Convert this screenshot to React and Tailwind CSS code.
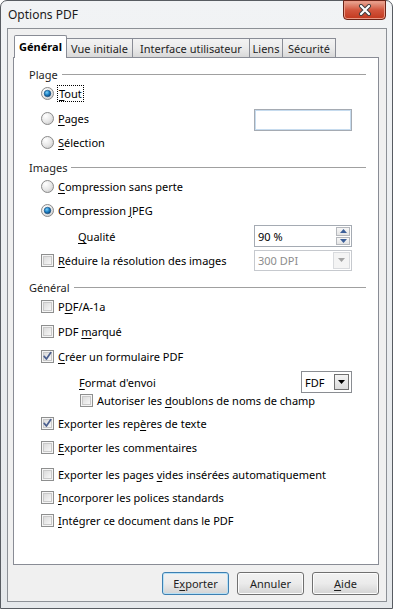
import React from "react"

function Radio({ checked }) {
  return (
    <svg width="13" height="13" viewBox="0 0 13 13" className="shrink-0">
      <defs>
        <radialGradient id="rbg" cx="0.35" cy="0.3" r="0.8">
          <stop offset="0" stopColor="#ffffff" />
          <stop offset="0.6" stopColor="#e6e6e6" />
          <stop offset="1" stopColor="#c9c9c9" />
        </radialGradient>
        <radialGradient id="rdot" cx="0.4" cy="0.35" r="0.7">
          <stop offset="0" stopColor="#7fd0f7" />
          <stop offset="0.5" stopColor="#1e84c8" />
          <stop offset="1" stopColor="#0d3f70" />
        </radialGradient>
      </defs>
      <circle cx="6.5" cy="6.5" r="6" fill="url(#rbg)" stroke="#8a8a8a" />
      {checked && <circle cx="6.5" cy="6.5" r="3.3" fill="url(#rdot)" stroke="#154a78" strokeWidth="0.6" />}
    </svg>
  )
}

function Check({ checked }) {
  return (
    <svg width="13" height="13" viewBox="0 0 13 13" className="shrink-0">
      <defs>
        <linearGradient id="cbg" x1="0" y1="0" x2="1" y2="1">
          <stop offset="0" stopColor="#d9d9d9" />
          <stop offset="1" stopColor="#f9f9f9" />
        </linearGradient>
      </defs>
      <rect x="0.5" y="0.5" width="12" height="12" fill="#f5f5f5" stroke="#8e8f8f" />
      <rect x="2.5" y="2.5" width="8" height="8" fill="url(#cbg)" stroke="#c9c9c9" />
      {checked && (
        <path d="M3.2 6.4 L5.4 9 L9.8 2.6" fill="none" stroke="#4b5f8e" strokeWidth="1.7" strokeLinecap="round" strokeLinejoin="round" />
      )}
    </svg>
  )
}

function Header({ title, className }) {
  return (
    <div className={`flex items-center h-[18px] pl-[15px] pr-[12px] ${className}`}>
      <span className="text-[#1e1e1e]">{title}</span>
      <div className="flex-1 ml-[4px] h-px bg-[#a0a0a0]" />
    </div>
  )
}

function OptRow({ className, pad = "pl-[27px]", children, control }) {
  return (
    <div className={`flex items-center h-[18px] pr-[26px] ${pad} ${className}`}>
      {children}
      {control && <div className="ml-auto flex items-center">{control}</div>}
    </div>
  )
}

function Btn({ children, primary }) {
  return (
    <div
      className={`w-[67px] h-[23px] rounded-[3px] border flex items-center justify-center text-[#1e1e1e] bg-gradient-to-b from-[#f2f2f2] via-[#ebebeb] to-[#d3d3d3] ${
        primary ? "border-[#3c7fb1] shadow-[inset_0_0_0_1px_#b8e0f5]" : "border-[#707070] shadow-[inset_0_0_0_1px_#fcfcfc]"
      }`}
    >
      {children}
    </div>
  )
}

function Tab({ label, active, w }) {
  if (active) {
    return (
      <div className={`${w} h-[23px] -mb-px relative z-10 bg-white border border-b-0 border-[#898c95] rounded-t-[2px] flex items-center justify-center font-bold text-black pb-[2px]`}>
        {label}
      </div>
    )
  }
  return (
    <div className={`${w} h-[19px] -ml-px bg-gradient-to-b from-[#f3f3f3] via-[#ebebeb] to-[#d8d8d8] border border-b-0 border-[#898c95] flex items-center justify-center text-[#1e1e1e]`}>
      {label}
    </div>
  )
}

export default function App() {
  return (
    <div className="w-[393px] h-[609px] font-['Noto_Sans',sans-serif] text-[11px] leading-none text-black">
      <div className="w-[393px] h-[609px] flex flex-col border border-[#585c62] rounded-t-[7px] bg-gradient-to-b from-[#f1f3f5] to-[#e5e8eb]">
        {/* title bar */}
        <div className="h-[27px] flex items-start shrink-0">
          <span className="ml-[7px] mt-[8px] text-[12px] text-[#1b1b1b]">Options PDF</span>
          <div className="ml-auto mr-[6px] -mt-px w-[43px] h-[20px] rounded-b-[4px] border border-[#6b2418] bg-gradient-to-b from-[#e9a997] via-[#d2553d] to-[#c1361c] shadow-[inset_0_0_0_1px_#eb9a86] flex items-center justify-center">
            <svg width="14" height="12" viewBox="0 0 14 12">
              <path d="M3 2 L11 10 M11 2 L3 10" stroke="#3d3d3d" strokeWidth="4" strokeLinecap="round" />
              <path d="M3 2 L11 10 M11 2 L3 10" stroke="#ffffff" strokeWidth="2.2" strokeLinecap="round" />
            </svg>
          </div>
        </div>

        {/* client */}
        <div className="flex-1 ml-[6px] mr-[5px] mb-[6px] border border-[#8c9096] bg-[#f0f0f0] flex flex-col">
          <div className="flex items-end h-[22px] mt-[6px] pl-[6px]">
            <Tab label="Général" active w="w-[53px]" />
            <Tab label="Vue initiale" w="w-[67px]" />
            <Tab label="Interface utilisateur" w="w-[118px]" />
            <Tab label="Liens" w="w-[34px]" />
            <Tab label="Sécurité" w="w-[54px]" />
          </div>

          <div className="h-[508px] ml-[5px] mr-[7px] bg-white border border-[#898c95] flex flex-col">
            <Header title="Plage" className="mt-[7px]" />
            <OptRow className="mt-[1px]">
              <Radio checked />
              <span className="ml-[3px] px-[1px] py-[2px] border border-dotted border-black">
                <u className="underline-offset-2">T</u>out
              </span>
            </OptRow>
            <OptRow
              className="mt-[7px]"
              control={<div className="w-[98px] h-[22px] border border-[#a5abb3] shadow-[inset_0_0_0_1px_#c6dbee] bg-white mt-[4px]" />}
            >
              <Radio />
              <span className="ml-[4px]"><u className="underline-offset-2">P</u>ages</span>
            </OptRow>
            <OptRow className="mt-[6px]">
              <Radio />
              <span className="ml-[4px]"><u className="underline-offset-2">S</u>élection</span>
            </OptRow>

            <Header title="Images" className="mt-[7px]" />
            <OptRow className="mt-[1px]">
              <Radio />
              <span className="ml-[4px]"><u className="underline-offset-2">C</u>ompression sans perte</span>
            </OptRow>
            <OptRow className="mt-[6px]">
              <Radio checked />
              <span className="ml-[4px]">Compression <u className="underline-offset-2">J</u>PEG</span>
            </OptRow>
            <OptRow
              className="mt-[8px]"
              pad="pl-[64px]"
              control={
                <div className="w-[98px] h-[22px] border border-[#a5abb3] bg-white flex items-stretch">
                  <span className="flex-1 flex items-center pl-[3px]">90 %</span>
                  <div className="w-[16px] flex flex-col p-px gap-px">
                    <div className="flex-1 border border-[#b5b8bd] bg-gradient-to-b from-[#f7f7f7] to-[#e4e4e4] flex items-center justify-center">
                      <svg width="7" height="4" viewBox="0 0 7 4"><path d="M0 4 L3.5 0 L7 4 Z" fill="#3c5f99" /></svg>
                    </div>
                    <div className="flex-1 border border-[#b5b8bd] bg-gradient-to-b from-[#f7f7f7] to-[#e4e4e4] flex items-center justify-center">
                      <svg width="7" height="4" viewBox="0 0 7 4"><path d="M0 0 L7 0 L3.5 4 Z" fill="#3c5f99" /></svg>
                    </div>
                  </div>
                </div>
              }
            >
              <span><u className="underline-offset-2">Q</u>ualité</span>
            </OptRow>
            <OptRow
              className="mt-[6px]"
              control={
                <div className="w-[98px] h-[21px] border border-[#c6c9ce] bg-white flex items-stretch">
                  <span className="flex-1 flex items-center pl-[3px] text-[#8d8d8d]">300 DPI</span>
                  <div className="w-[17px] m-px border border-[#d9dbde] bg-[#f4f4f4] flex items-center justify-center">
                    <svg width="7" height="4" viewBox="0 0 7 4"><path d="M0 0 L7 0 L3.5 4 Z" fill="#a3a3a3" /></svg>
                  </div>
                </div>
              }
            >
              <Check />
              <span className="ml-[4px]"><u className="underline-offset-2">R</u>éduire la résolution des images</span>
            </OptRow>

            <Header title="Général" className="mt-[9px]" />
            <OptRow className="mt-[1px]">
              <Check />
              <span className="ml-[4px]">P<u className="underline-offset-2">D</u>F/A-1a</span>
            </OptRow>
            <OptRow className="mt-[7px]">
              <Check />
              <span className="ml-[4px]">PDF <u className="underline-offset-2">m</u>arqué</span>
            </OptRow>
            <OptRow className="mt-[7px]">
              <Check checked />
              <span className="ml-[4px]"><u className="underline-offset-2">C</u>réer un formulaire PDF</span>
            </OptRow>
            <OptRow
              className="mt-[8px]"
              pad="pl-[65px]"
              control={
                <div className="w-[51px] h-[22px] border border-[#8a8d92] bg-white flex items-stretch">
                  <span className="flex-1 flex items-center pl-[3px]">FDF</span>
                  <div className="w-[15px] m-[2px] border border-[#707070] bg-gradient-to-b from-[#f4f4f4] to-[#dcdcdc] flex items-center justify-center">
                    <svg width="7" height="4" viewBox="0 0 7 4"><path d="M0 0 L7 0 L3.5 4 Z" fill="#000000" /></svg>
                  </div>
                </div>
              }
            >
              <span><u className="underline-offset-2">F</u>ormat d'envoi</span>
            </OptRow>
            <OptRow pad="pl-[66px]">
              <Check />
              <span className="ml-[4px]">Autoriser les <u className="underline-offset-2">d</u>oublons de noms de champ</span>
            </OptRow>
            <OptRow className="mt-[5px]">
              <Check checked />
              <span className="ml-[4px]">Exporter les rep<u className="underline-offset-2">è</u>res de texte</span>
            </OptRow>
            <OptRow className="mt-[6px]">
              <Check />
              <span className="ml-[4px]"><u className="underline-offset-2">E</u>xporter les commentaires</span>
            </OptRow>
            <OptRow className="mt-[9px]">
              <Check />
              <span className="ml-[4px]">Exporter les pages <u className="underline-offset-2">v</u>ides insérées automatiquement</span>
            </OptRow>
            <OptRow className="mt-[5px]">
              <Check />
              <span className="ml-[4px]"><u className="underline-offset-2">I</u>ncorporer les polices standards</span>
            </OptRow>
            <OptRow className="mt-[5px]">
              <Check />
              <span className="ml-[4px]"><u className="underline-offset-2">I</u>ntégrer ce document dans le PDF</span>
            </OptRow>
          </div>

          <div className="flex justify-end gap-[8px] mt-[7px] mr-[7px]">
            <Btn primary>E<u className="underline-offset-2">x</u>porter</Btn>
            <Btn>Annuler</Btn>
            <Btn><u className="underline-offset-2">A</u>ide</Btn>
          </div>
        </div>
      </div>
    </div>
  )
}
